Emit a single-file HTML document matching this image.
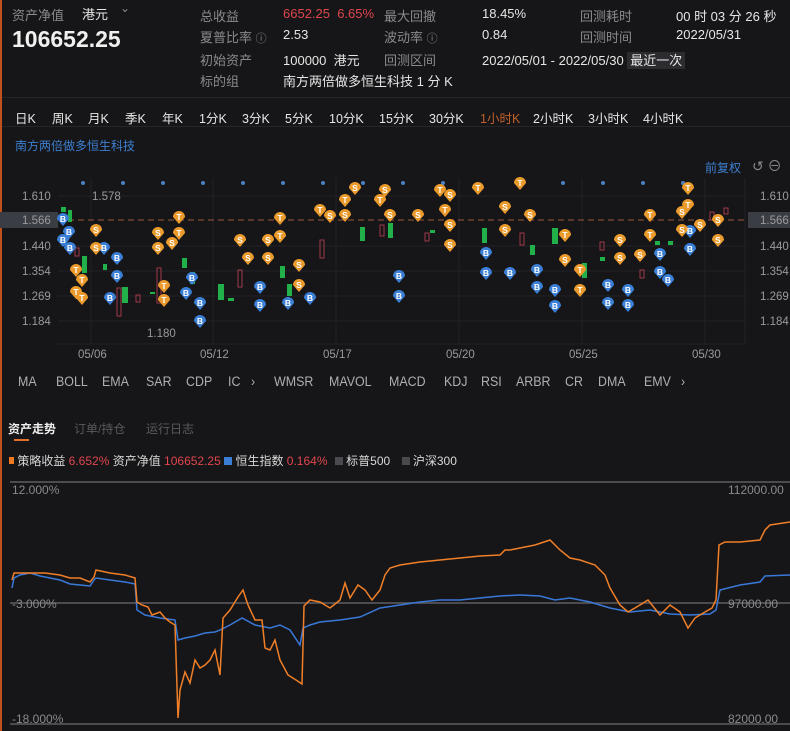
<!DOCTYPE html>
<html><head><meta charset="utf-8"><style>
*{margin:0;padding:0;box-sizing:border-box}
body{width:790px;height:731px;background:#161618;color:#d8d8d8;font-family:"Liberation Sans","Noto Sans CJK SC",sans-serif;font-size:13px;position:relative;overflow:hidden}
.a{position:absolute;white-space:nowrap}
.g{color:#8a8a8e}
.r{color:#e0464e}
.w{color:#e6e6e6}
.ind span{position:absolute;top:374px;font-size:13.5px;color:#b0b0b4;transform:scaleX(0.92);transform-origin:left;white-space:nowrap}
</style></head><body>
<div class="a" style="left:0;top:0;width:2px;height:731px;background:#c0501c"></div>
<div class="a g" style="left:12px;top:5px">资产净值</div>
<div class="a w" style="left:82px;top:4px">港元</div>
<div class="a g" style="left:120px;top:1px;font-size:12px">⌄</div>
<div class="a w" style="left:12px;top:26px;font-size:23px;font-weight:bold;color:#f0f0f0">106652.25</div>

<div class="a g" style="left:200px;top:6px">总收益</div>
<div class="a r" style="left:283px;top:6px">6652.25&nbsp; 6.65%</div>
<div class="a g" style="left:200px;top:27px">夏普比率 <span style="font-size:11px">ⓘ</span></div>
<div class="a w" style="left:283px;top:27px">2.53</div>
<div class="a g" style="left:200px;top:50px">初始资产</div>
<div class="a w" style="left:283px;top:50px">100000&nbsp; 港元</div>
<div class="a g" style="left:200px;top:71px">标的组</div>
<div class="a w" style="left:283px;top:71px">南方两倍做多恒生科技 1 分 K</div>

<div class="a g" style="left:384px;top:6px">最大回撤</div>
<div class="a w" style="left:482px;top:6px">18.45%</div>
<div class="a g" style="left:384px;top:27px">波动率 <span style="font-size:11px">ⓘ</span></div>
<div class="a w" style="left:482px;top:27px">0.84</div>
<div class="a g" style="left:384px;top:50px">回测区间</div>
<div class="a w" style="left:482px;top:50px">2022/05/01 - 2022/05/30 <span style="background:#2c2c30;padding:1px 3px">最近一次</span></div>

<div class="a g" style="left:580px;top:6px">回测耗时</div>
<div class="a w" style="left:676px;top:6px">00 时 03 分 26 秒</div>
<div class="a g" style="left:580px;top:27px">回测时间</div>
<div class="a w" style="left:676px;top:27px">2022/05/31</div>

<div class="a" style="left:2px;top:97px;width:788px;height:1px;background:#26262a"></div>
<div class="a w" style="left:15px;top:108px;font-size:12.5px">
<span style="position:absolute;left:0">日K</span><span style="position:absolute;left:37px">周K</span><span style="position:absolute;left:73px">月K</span><span style="position:absolute;left:110px">季K</span><span style="position:absolute;left:147px">年K</span><span style="position:absolute;left:184px">1分K</span><span style="position:absolute;left:227px">3分K</span><span style="position:absolute;left:270px">5分K</span><span style="position:absolute;left:314px">10分K</span><span style="position:absolute;left:364px">15分K</span><span style="position:absolute;left:414px">30分K</span><span style="position:absolute;left:465px;color:#c0602a">1小时K</span><span style="position:absolute;left:518px">2小时K</span><span style="position:absolute;left:573px">3小时K</span><span style="position:absolute;left:628px">4小时K</span></div>
<div class="a" style="left:2px;top:126px;width:788px;height:1px;background:#26262a"></div>
<div class="a" style="left:15px;top:137px;font-size:12px;color:#3d7fd0">南方两倍做多恒生科技</div>
<div class="a" style="left:705px;top:159px;font-size:12px;color:#3d7fd0">前复权</div>
<div class="a g" style="left:752px;top:156px;font-size:14px">↺ ⊖</div>

<svg class="a" style="left:0;top:170px" width="790" height="195" viewBox="0 170 790 195">
<g stroke="#232327" stroke-width="1">
<line x1="58" y1="196" x2="745" y2="196"/><line x1="58" y1="246" x2="745" y2="246"/><line x1="58" y1="271" x2="745" y2="271"/><line x1="58" y1="296" x2="745" y2="296"/><line x1="58" y1="321" x2="745" y2="321"/><line x1="58" y1="344" x2="745" y2="344"/>
<line x1="91" y1="178" x2="91" y2="344"/><line x1="213" y1="178" x2="213" y2="344"/><line x1="336" y1="178" x2="336" y2="344"/><line x1="459" y1="178" x2="459" y2="344"/><line x1="582" y1="178" x2="582" y2="344"/><line x1="705" y1="178" x2="705" y2="344"/><line x1="745" y1="178" x2="745" y2="344"/>
</g>
<g fill="#4a7fc0"><circle cx="83" cy="183" r="2"/><circle cx="123" cy="183" r="2"/><circle cx="163" cy="183" r="2"/><circle cx="203" cy="183" r="2"/><circle cx="243" cy="183" r="2"/><circle cx="283" cy="183" r="2"/><circle cx="323" cy="183" r="2"/><circle cx="363" cy="183" r="2"/><circle cx="403" cy="183" r="2"/><circle cx="443" cy="183" r="2"/><circle cx="523" cy="183" r="2"/><circle cx="563" cy="183" r="2"/><circle cx="603" cy="183" r="2"/><circle cx="643" cy="183" r="2"/><circle cx="683" cy="183" r="2"/></g>
<rect x="0" y="212" width="58" height="16" fill="#3a3d44"/>
<rect x="748" y="212" width="42" height="16" fill="#3a3d44"/>
<line x1="58" y1="220" x2="745" y2="220" stroke="#9a5a3a" stroke-dasharray="6,4"/>
<g fill="#9a9a9e" font-size="11.5" font-family="Liberation Sans,sans-serif">
<text x="22" y="200">1.610</text><text x="22" y="224">1.566</text><text x="22" y="250">1.440</text><text x="22" y="275">1.354</text><text x="22" y="300">1.269</text><text x="22" y="325">1.184</text>
<text x="760" y="200">1.610</text><text x="760" y="224">1.566</text><text x="760" y="250">1.440</text><text x="760" y="275">1.354</text><text x="760" y="300">1.269</text><text x="760" y="325">1.184</text>
<text x="92" y="200">1.578</text><text x="147" y="337">1.180</text>
<text x="78" y="358">05/06</text><text x="200" y="358">05/12</text><text x="323" y="358">05/17</text><text x="446" y="358">05/20</text><text x="569" y="358">05/25</text><text x="692" y="358">05/30</text>
</g>
<g fill="#22b04a"><rect x="61" y="207" width="5" height="5"/><rect x="68" y="210" width="4" height="12"/><rect x="82" y="256" width="5" height="17"/><rect x="103" y="264" width="4" height="6"/><rect x="122" y="287" width="6" height="16"/><rect x="150" y="292" width="5" height="2"/><rect x="182" y="258" width="5" height="10"/><rect x="190" y="272" width="5" height="12"/><rect x="218" y="284" width="6" height="16"/><rect x="228" y="298" width="6" height="3"/><rect x="280" y="266" width="5" height="12"/><rect x="287" y="284" width="5" height="12"/><rect x="360" y="227" width="5" height="14"/><rect x="388" y="223" width="5" height="15"/><rect x="430" y="230" width="5" height="3"/><rect x="482" y="228" width="5" height="15"/><rect x="530" y="245" width="5" height="10"/><rect x="552" y="228" width="6" height="16"/><rect x="582" y="263" width="5" height="15"/><rect x="600" y="257" width="5" height="4"/><rect x="655" y="241" width="5" height="4"/><rect x="668" y="241" width="5" height="4"/></g>
<g fill="none" stroke="#a03848"><rect x="75" y="248" width="4" height="8"/><rect x="117" y="288" width="4" height="28"/><rect x="136" y="295" width="4" height="7"/><rect x="157" y="268" width="4" height="35"/><rect x="238" y="270" width="4" height="17"/><rect x="320" y="240" width="4" height="18"/><rect x="380" y="225" width="4" height="11"/><rect x="425" y="233" width="4" height="8"/><rect x="520" y="233" width="4" height="12"/><rect x="600" y="242" width="4" height="8"/><rect x="640" y="270" width="4" height="8"/><rect x="710" y="212" width="4" height="8"/><rect x="724" y="208" width="4" height="6"/></g>
<g font-size="8.5" font-weight="bold" text-anchor="middle" font-family="Liberation Sans,sans-serif" fill="#fff">
<g fill="#3a7fd5">
<path d="M57,219a6,6 0 1 1 12,0l-6,7z M63,232a6,6 0 1 1 12,0l-6,7z M57,240a6,6 0 1 1 12,0l-6,7z M64,248a6,6 0 1 1 12,0l-6,7z M98,248a6,6 0 1 1 12,0l-6,7z M111,258a6,6 0 1 1 12,0l-6,7z M111,276a6,6 0 1 1 12,0l-6,7z M104,298a6,6 0 1 1 12,0l-6,7z M180,293a6,6 0 1 1 12,0l-6,7z M186,278a6,6 0 1 1 12,0l-6,7z M194,303a6,6 0 1 1 12,0l-6,7z M194,321a6,6 0 1 1 12,0l-6,7z M254,287a6,6 0 1 1 12,0l-6,7z M254,305a6,6 0 1 1 12,0l-6,7z M282,303a6,6 0 1 1 12,0l-6,7z M304,298a6,6 0 1 1 12,0l-6,7z M393,276a6,6 0 1 1 12,0l-6,7z M393,296a6,6 0 1 1 12,0l-6,7z M480,253a6,6 0 1 1 12,0l-6,7z M480,273a6,6 0 1 1 12,0l-6,7z M504,273a6,6 0 1 1 12,0l-6,7z M531,270a6,6 0 1 1 12,0l-6,7z M531,287a6,6 0 1 1 12,0l-6,7z M549,290a6,6 0 1 1 12,0l-6,7z M549,306a6,6 0 1 1 12,0l-6,7z M602,285a6,6 0 1 1 12,0l-6,7z M602,303a6,6 0 1 1 12,0l-6,7z M622,290a6,6 0 1 1 12,0l-6,7z M622,305a6,6 0 1 1 12,0l-6,7z M654,254a6,6 0 1 1 12,0l-6,7z M654,272a6,6 0 1 1 12,0l-6,7z M662,280a6,6 0 1 1 12,0l-6,7z M684,231a6,6 0 1 1 12,0l-6,7z M684,249a6,6 0 1 1 12,0l-6,7z"/>
</g>
<g fill="#eb9a2c">
<path d="M90,230a6,6 0 1 1 12,0l-6,7z M90,248a6,6 0 1 1 12,0l-6,7z M152,233a6,6 0 1 1 12,0l-6,7z M152,248a6,6 0 1 1 12,0l-6,7z M166,243a6,6 0 1 1 12,0l-6,7z M234,240a6,6 0 1 1 12,0l-6,7z M242,258a6,6 0 1 1 12,0l-6,7z M262,240a6,6 0 1 1 12,0l-6,7z M262,258a6,6 0 1 1 12,0l-6,7z M293,265a6,6 0 1 1 12,0l-6,7z M293,285a6,6 0 1 1 12,0l-6,7z M324,216a6,6 0 1 1 12,0l-6,7z M339,215a6,6 0 1 1 12,0l-6,7z M349,188a6,6 0 1 1 12,0l-6,7z M379,190a6,6 0 1 1 12,0l-6,7z M384,215a6,6 0 1 1 12,0l-6,7z M412,215a6,6 0 1 1 12,0l-6,7z M444,195a6,6 0 1 1 12,0l-6,7z M444,225a6,6 0 1 1 12,0l-6,7z M444,245a6,6 0 1 1 12,0l-6,7z M499,207a6,6 0 1 1 12,0l-6,7z M499,230a6,6 0 1 1 12,0l-6,7z M524,215a6,6 0 1 1 12,0l-6,7z M559,260a6,6 0 1 1 12,0l-6,7z M614,240a6,6 0 1 1 12,0l-6,7z M614,258a6,6 0 1 1 12,0l-6,7z M634,255a6,6 0 1 1 12,0l-6,7z M676,212a6,6 0 1 1 12,0l-6,7z M676,230a6,6 0 1 1 12,0l-6,7z M712,220a6,6 0 1 1 12,0l-6,7z M712,240a6,6 0 1 1 12,0l-6,7z M694,225a6,6 0 1 1 12,0l-6,7z
M70,270a6,6 0 1 1 12,0l-6,7z M76,280a6,6 0 1 1 12,0l-6,7z M70,292a6,6 0 1 1 12,0l-6,7z M76,298a6,6 0 1 1 12,0l-6,7z M158,286a6,6 0 1 1 12,0l-6,7z M158,300a6,6 0 1 1 12,0l-6,7z M173,217a6,6 0 1 1 12,0l-6,7z M173,233a6,6 0 1 1 12,0l-6,7z M274,218a6,6 0 1 1 12,0l-6,7z M274,236a6,6 0 1 1 12,0l-6,7z M314,210a6,6 0 1 1 12,0l-6,7z M339,200a6,6 0 1 1 12,0l-6,7z M374,200a6,6 0 1 1 12,0l-6,7z M434,190a6,6 0 1 1 12,0l-6,7z M439,210a6,6 0 1 1 12,0l-6,7z M472,188a6,6 0 1 1 12,0l-6,7z M514,183a6,6 0 1 1 12,0l-6,7z M559,235a6,6 0 1 1 12,0l-6,7z M574,270a6,6 0 1 1 12,0l-6,7z M574,290a6,6 0 1 1 12,0l-6,7z M644,215a6,6 0 1 1 12,0l-6,7z M644,235a6,6 0 1 1 12,0l-6,7z M682,188a6,6 0 1 1 12,0l-6,7z M682,205a6,6 0 1 1 12,0l-6,7z"/>
</g>
<text x="63" y="222">B</text><text x="69" y="235">B</text><text x="63" y="243">B</text><text x="70" y="251">B</text><text x="104" y="251">B</text><text x="117" y="261">B</text><text x="117" y="279">B</text><text x="110" y="301">B</text><text x="186" y="296">B</text><text x="192" y="281">B</text><text x="200" y="306">B</text><text x="200" y="324">B</text><text x="260" y="290">B</text><text x="260" y="308">B</text><text x="288" y="306">B</text><text x="310" y="301">B</text><text x="399" y="279">B</text><text x="399" y="299">B</text><text x="486" y="256">B</text><text x="486" y="276">B</text><text x="510" y="276">B</text><text x="537" y="273">B</text><text x="537" y="290">B</text><text x="555" y="293">B</text><text x="555" y="309">B</text><text x="608" y="288">B</text><text x="608" y="306">B</text><text x="628" y="293">B</text><text x="628" y="308">B</text><text x="660" y="257">B</text><text x="660" y="275">B</text><text x="668" y="283">B</text><text x="690" y="234">B</text><text x="690" y="252">B</text>
<text x="96" y="233">S</text><text x="96" y="251">S</text><text x="158" y="236">S</text><text x="158" y="251">S</text><text x="172" y="246">S</text><text x="240" y="243">S</text><text x="248" y="261">S</text><text x="268" y="243">S</text><text x="268" y="261">S</text><text x="299" y="268">S</text><text x="299" y="288">S</text><text x="330" y="219">S</text><text x="345" y="218">S</text><text x="355" y="191">S</text><text x="385" y="193">S</text><text x="390" y="218">S</text><text x="418" y="218">S</text><text x="450" y="198">S</text><text x="450" y="228">S</text><text x="450" y="248">S</text><text x="505" y="210">S</text><text x="505" y="233">S</text><text x="530" y="218">S</text><text x="565" y="263">S</text><text x="620" y="243">S</text><text x="620" y="261">S</text><text x="640" y="258">S</text><text x="682" y="215">S</text><text x="682" y="233">S</text><text x="718" y="223">S</text><text x="718" y="243">S</text><text x="700" y="228">S</text>
<text x="76" y="273">T</text><text x="82" y="283">T</text><text x="76" y="295">T</text><text x="82" y="301">T</text><text x="164" y="289">T</text><text x="164" y="303">T</text><text x="179" y="220">T</text><text x="179" y="236">T</text><text x="280" y="221">T</text><text x="280" y="239">T</text><text x="320" y="213">T</text><text x="345" y="203">T</text><text x="380" y="203">T</text><text x="440" y="193">T</text><text x="445" y="213">T</text><text x="478" y="191">T</text><text x="520" y="186">T</text><text x="565" y="238">T</text><text x="580" y="273">T</text><text x="580" y="293">T</text><text x="650" y="218">T</text><text x="650" y="238">T</text><text x="688" y="191">T</text><text x="688" y="208">T</text>
</g>
</svg>

<div class="ind">
<span style="left:18px">MA</span><span style="left:56px">BOLL</span><span style="left:102px">EMA</span><span style="left:146px">SAR</span><span style="left:186px">CDP</span><span style="left:228px">IC</span><span style="left:251px">›</span><span style="left:274px">WMSR</span><span style="left:329px">MAVOL</span><span style="left:389px">MACD</span><span style="left:444px">KDJ</span><span style="left:481px">RSI</span><span style="left:516px">ARBR</span><span style="left:565px">CR</span><span style="left:598px">DMA</span><span style="left:644px">EMV</span><span style="left:681px">›</span></div>

<div class="a" style="left:8px;top:420px;font-size:12px;font-weight:bold;color:#f0f0f0">资产走势</div>
<div class="a" style="left:74px;top:420px;font-size:12px;color:#5a5a5e">订单/持仓</div>
<div class="a" style="left:146px;top:420px;font-size:12px;color:#5a5a5e">运行日志</div>
<div class="a" style="left:14px;top:439px;width:15px;height:2px;background:#e0702a"></div>
<div class="a" style="left:9px;top:452px;font-size:12px;color:#d8d8d8">
<span style="display:inline-block;width:5px;height:7px;background:#f07a22;vertical-align:1px"></span> 策略收益 <span class="r">6.652%</span> 资产净值 <span class="r">106652.25</span> <span style="display:inline-block;width:8px;height:8px;background:#3a7fd5;vertical-align:0"></span> 恒生指数 <span class="r">0.164%</span> <span style="display:inline-block;width:8px;height:8px;background:#4a4a4e;margin-left:4px"></span> 标普500 <span style="display:inline-block;width:8px;height:8px;background:#4a4a4e;margin-left:8px"></span> 沪深300</div>

<svg class="a" style="left:0;top:475px" width="790" height="256" viewBox="0 475 790 256">
<g stroke="#5e5e62" stroke-width="1.5"><line x1="10" y1="482" x2="790" y2="482"/><line x1="10" y1="603" x2="790" y2="603"/><line x1="10" y1="724" x2="790" y2="724"/></g>
<g fill="#8a8a8e" font-size="12" font-family="Liberation Sans,sans-serif"><text x="12" y="494">12.000%</text><text x="12" y="608">-3.000%</text><text x="12" y="723">-18.000%</text><text x="728" y="494">112000.00</text><text x="728" y="608">97000.00</text><text x="728" y="723">82000.00</text></g>
<polyline fill="none" stroke="#3a78d8" stroke-width="1.5" points="12,588 14,578 20,575 30,573 40,576 50,578 60,580 70,584 80,585 90,586 94,580 96,578 110,580 125,582 135,584 137,610 145,615 160,618 175,620 178,640 185,638 195,636 205,633 215,632 220,630 230,625 242,618 255,625 270,628 280,625 290,630 300,645 303,628 310,625 320,622 340,620 360,617 380,608 400,605 420,602 440,600 460,600 480,598 500,596 520,595 540,596 555,600 570,598 590,602 610,608 630,612 650,610 670,614 690,615 710,614 716,610 720,590 740,585 760,582 765,576 790,575"/>
<polyline fill="none" stroke="#f07f28" stroke-width="1.5" points="12,580 14,573 30,573 45,573 60,575 70,578 80,578 90,582 94,577 96,570 110,573 125,575 135,578 137,602 142,605 148,607 152,615 160,612 165,618 170,622 175,625 178,718 180,690 185,672 190,683 195,660 200,668 205,665 210,660 215,650 220,675 223,618 230,610 238,597 243,590 248,605 255,620 262,620 265,648 270,650 275,640 280,660 288,675 296,680 302,684 304,606 310,600 320,602 330,608 340,600 345,583 350,598 358,585 365,590 372,600 380,590 385,575 390,568 400,565 420,562 440,560 460,558 480,556 500,555 505,550 510,550 520,548 535,545 550,540 560,550 570,558 580,560 595,565 605,575 610,588 620,605 628,612 640,605 648,600 660,615 670,605 680,612 688,628 695,618 705,612 712,608 716,600 719,545 725,542 740,542 760,540 765,530 770,525 790,522"/>
</svg>
</body></html>
